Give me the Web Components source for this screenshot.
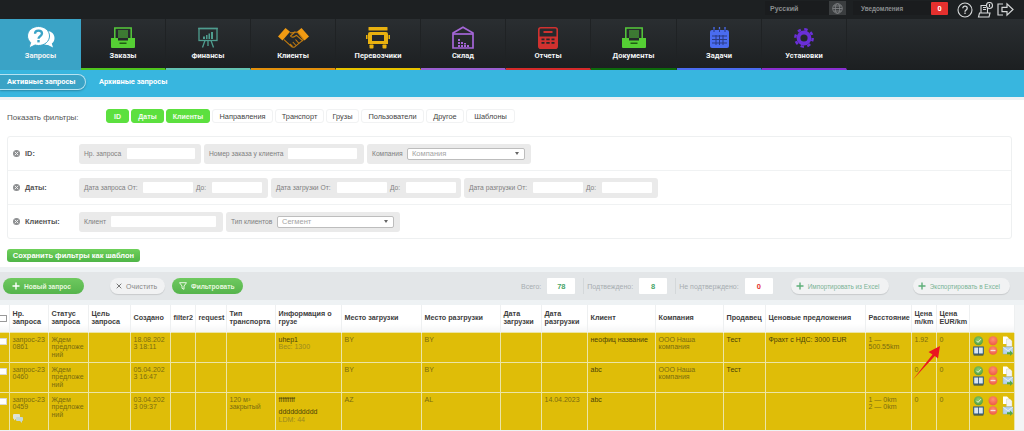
<!DOCTYPE html>
<html lang="ru">
<head>
<meta charset="utf-8">
<title>Запросы</title>
<style>
html, body { margin: 0; height: 431px; overflow: hidden; background: #eef2f4; font-family: "Liberation Sans", Arial, sans-serif; }
</style>
</head>
<body>
<app-topbar></app-topbar>
<app-nav>
  <nav-tab label="Запросы" icon="ask" w="81" active></nav-tab>
  <nav-tab label="Заказы" icon="tray" w="85" color="#4fc51f"></nav-tab>
  <nav-tab label="Финансы" icon="board" w="85" color="#62c2b2"></nav-tab>
  <nav-tab label="Клиенты" icon="hands" w="85" color="#e2900d"></nav-tab>
  <nav-tab label="Перевозчики" icon="truck" w="85" color="#e6c200"></nav-tab>
  <nav-tab label="Склад" icon="house" w="85" color="#9a5fd0"></nav-tab>
  <nav-tab label="Отчеты" icon="calc" w="85" color="#d42a2a"></nav-tab>
  <nav-tab label="Документы" icon="tray" w="86" color="#0c6a0c"></nav-tab>
  <nav-tab label="Задачи" icon="cal" w="85" color="#4a6cf0"></nav-tab>
  <nav-tab label="Установки" icon="gear" w="85" color="#8a2fd0"></nav-tab>
</app-nav>
<app-subnav></app-subnav>
<filter-panel>
  <filter-row label="ID:">
    <filter-group w="122"><f-field label="Нр. запроса" lw="43" w="68"></f-field></filter-group>
    <filter-group w="160"><f-field label="Номер заказа у клиента" lw="79" w="69"></f-field></filter-group>
    <filter-group w="164"><f-field label="Компания" lw="35" w="118" select="Компания"></f-field></filter-group>
  </filter-row>
  <filter-row label="Даты:">
    <filter-group w="189"><f-field label="Дата запроса От:" lw="59" w="50"></f-field><f-field label="До:" lw="16" w="50"></f-field></filter-group>
    <filter-group w="190"><f-field label="Дата загрузки От:" lw="61" w="50"></f-field><f-field label="До:" lw="16" w="50"></f-field></filter-group>
    <filter-group w="194"><f-field label="Дата разгрузки От:" lw="64" w="50"></f-field><f-field label="До:" lw="16" w="50"></f-field></filter-group>
  </filter-row>
  <filter-row label="Клиенты:" last>
    <filter-group w="144"><f-field label="Клиент" lw="27" w="105"></f-field></filter-group>
    <filter-group w="174"><f-field label="Тип клиентов" lw="46" w="117" select="Сегмент"></f-field></filter-group>
  </filter-row>
</filter-panel>
<app-toolbar></app-toolbar>
<request-table></request-table>
<red-arrow></red-arrow>

<script>
const ICONS = {
  ask: `<svg width="28" height="23" viewBox="0 0 28 23"><path fill="#fff" d="M20 5c4.400 0 7.500 3 7.500 7 0 2.400-1 4.300-2.700 5.500l1.200 4-5-2.600c-2 .2-4-.3-5.500-1.400z"/><path fill="#fff" stroke="#3aa3c6" stroke-width="1" d="M11.500.5C17.600.5 22.500 4.600 22.500 10s-4.900 9.500-11 9.500c-1.200 0-2.300-.2-3.400-.5L2 22l1.600-5.500C1.700 14.800.5 12.500.5 10 .5 4.600 5.400.5 11.500.5z"/><path fill="none" stroke="#3aa3c6" stroke-width="2.300" d="M8 7.800c0-2 1.500-3.200 3.500-3.200s3.500 1.200 3.500 3c0 2.700-3.500 2.600-3.500 5.200"/><rect x="10.300" y="14" width="2.400" height="2.400" fill="#3aa3c6"/></svg>`,
  tray: `<svg width="24" height="21" viewBox="0 0 24 21"><path fill="none" stroke="#55c93b" stroke-width="1.500" d="M3.800 11V1h16.400v10"/><path stroke="#55c93b" d="M7 4h10M7 6h10M7 8h10M7 10h10"/><path fill="#55cf34" d="M0 11h7v2.500h10V11h7v9a1 1 0 0 1-1 1H1a1 1 0 0 1-1-1z"/><rect x="8.500" y="15.500" width="7" height="1.500" fill="#1f5c14"/></svg>`,
  board: `<svg width="20" height="21" viewBox="0 0 20 21"><g fill="none" stroke="#4f9d8f" stroke-width="1.300"><rect x="1" y="1.500" width="18" height="12"/><path d="M.2 1.500h19.600M7 13.500 4.500 20.500M13 13.500l2.500 7M10 13.500V19"/></g><path fill="#4f9d8f" d="M5 12V9.500h2V12zM8 12V8h1.500v4zM10.500 12V6.500H12V12zM13 12V5h2v7z"/></svg>`,
  hands: `<svg width="31" height="20" viewBox="0 0 31 20"><path fill="#f09a12" d="M7.500 0 12 3.800 4.500 12.500 0 8.500zM23.500 0 31 8.500l-4.500 4L19 3.800z"/><g fill="none" stroke="#c27c10" stroke-width="1.100" stroke-linejoin="round"><path d="M12 4.500c2 .8 3.500.2 5-.5l2.500.2 6 7.500-8.500 7c-1.500.8-3 .5-4-.5l-7-6.500"/><path d="M17 4 12.500 8c1 1.500 3 1.500 4.500.3l1.500-1L25 13M21 15.500l-3.500-4M18 17.500l-3.200-3.500M14.500 18.500l-2.500-2.500"/></g></svg>`,
  truck: `<svg width="24" height="22" viewBox="0 0 24 22"><g fill="#e9b10f"><rect x="2.500" y="0" width="19" height="3.500" rx=".6"/><path d="M4 5h16a2 2 0 0 1 2 2v10H2V7a2 2 0 0 1 2-2zm2 3v6h12V8z" fill-rule="evenodd"/><rect x="0" y="8" width="1.500" height="4"/><rect x="22.500" y="8" width="1.500" height="4"/><rect x="3.500" y="17.500" width="4" height="4" rx=".7"/><rect x="16.500" y="17.500" width="4" height="4" rx=".7"/></g></svg>`,
  house: `<svg width="22" height="23" viewBox="0 0 22 23"><g fill="none" stroke="#a566d8" stroke-width="1.700"><path d="M1 7 11 1.200 21 7v15H1z"/><path d="M1 8h20" /></g><path fill="#a566d8" d="M6 13h2v2H6zM6 16h2v2H6zM6 19h2v2H6zM9 16h2v2H9zM9 19h2v2H9zM12 19h2v2h-2zM15 19h2v2h-2zM12 17h2v1.500h-2z"/></svg>`,
  calc: `<svg width="20" height="22" viewBox="0 0 20 22"><rect x=".8" y=".8" width="18.400" height="20.400" rx="2" fill="none" stroke="#d0312f" stroke-width="1.600"/><rect x="5.500" y="4" width="9" height="2" fill="#d0312f"/><path fill="#d0312f" d="M1 9.500h18V21H1zm2.500 2v1.700h3v-1.700zm4.800 0v1.700h3.400v-1.700zm5.200 0v1.700h3v-1.700zM3.500 15v1.700h3V15zm4.800 0v1.700h3.400V15zm5.200 0v1.700h3V15z" fill-rule="evenodd"/></svg>`,
  cal: `<svg width="19" height="21" viewBox="0 0 19 21"><path fill="#4a6cf0" d="M2 3h15a2 2 0 0 1 2 2v14a2 2 0 0 1-2 2H2a2 2 0 0 1-2-2V5a2 2 0 0 1 2-2z"/><path stroke="#4a6cf0" stroke-width="1.300" d="M4 0v3M9.500 0v3M15 0v3"/><path stroke="#1f2a60" stroke-width="1" d="M4 2v3M9.500 2v3M15 2v3M2 9h15M2 12.500h15M2 16h15M6 8v10M9.500 8v10M13 8v10" opacity=".75"/></svg>`,
  gear: `<svg width="20" height="20" viewBox="0 0 20 20"><circle cx="10" cy="10" r="8.700" fill="none" stroke="#6a2fd8" stroke-width="2.400" stroke-dasharray="3.400 3.430"/><circle cx="10" cy="10" r="5.500" fill="none" stroke="#6a2fd8" stroke-width="3.800"/></svg>`
};

class AppTopbar extends HTMLElement {
  constructor() {
    super();
    this.attachShadow({ mode: "open" }).innerHTML = `
    <style>
      :host { display: flex; height: 19px; background: #1d2022; padding-left: 765px; box-sizing: border-box; color: #8a8d8f; font: bold 7px "Liberation Sans", sans-serif; }
      .box { height: 14px; margin-top: 1px; background: #1a1c1e; display: flex; align-items: center; }
      .lang { width: 81px; padding-left: 5px; box-sizing: border-box; justify-content: space-between; }
      .globe { width: 17px; height: 14px; background: #3a3d3f; display: flex; align-items: center; justify-content: center; }
      .note { width: 97px; margin-left: 7px; padding-left: 8px; box-sizing: border-box; font-size: 6.300px; justify-content: space-between; }
      .badge { width: 17px; height: 13px; margin-right: 2px; background: #e5302e; color: #fff; font-size: 7.500px; display: flex; align-items: center; justify-content: center; border-radius: 1px; }
      .ic { display: flex; align-items: center; gap: 4px; margin-left: 7px; }
    </style>
    <div class="box lang">Русский
      <span class="globe"><svg width="11" height="11" viewBox="0 0 11 11" fill="none" stroke="#85888a" stroke-width=".8"><circle cx="5.500" cy="5.500" r="4.800"/><ellipse cx="5.500" cy="5.500" rx="2.200" ry="4.800"/><path d="M.7 5.500h9.600M1.500 3h8M1.500 8h8"/></svg></span>
    </div>
    <div class="box note">Уведомления<span class="badge">0</span></div>
    <div class="ic">
      <svg width="16" height="16" viewBox="0 0 16 16" fill="none" stroke="#d6d8d9" stroke-width="1.100"><circle cx="8" cy="8" r="7"/><path stroke-width="1.300" d="M5.800 6.300c0-1.300 1-2.100 2.200-2.100s2.200.8 2.200 2c0 1.800-2.200 1.700-2.200 3.500M8 10.600V12"/></svg>
      <svg width="16" height="16" viewBox="0 0 16 16" fill="none" stroke="#d6d8d9" stroke-width="1.100"><path d="M4 3.500h6.500V11H13l-1 4H1.500l1-4H4zM4 11h6.500"/><path d="M6 5.500h3M6 7.500h3"/><circle cx="12.500" cy="3.500" r="3" fill="#1d2022"/><path d="M12.500 2v3"/></svg>
      <svg width="17" height="15" viewBox="0 0 17 15" fill="none" stroke="#d6d8d9" stroke-width="1.200"><path d="M6 2H1v11h5"/><path d="M5 5.300h5V1.800l6 5.700-6 5.700V9.700H5z"/></svg>
    </div>`;
  }
}

class AppNav extends HTMLElement {
  constructor() {
    super();
    this.attachShadow({ mode: "open" }).innerHTML = `
    <style>
      :host { display: flex; height: 51px; background: linear-gradient(#2a2e31, #1c1f21); }
    </style>
    <slot></slot>`;
  }
}

class NavTab extends HTMLElement {
  connectedCallback() {
    const color = this.getAttribute("color") || "#3aa3c6";
    const active = this.hasAttribute("active");
    this.attachShadow({ mode: "open" }).innerHTML = `
    <style>
      :host { display: flex; flex-direction: column; align-items: center; box-sizing: border-box; height: 51px; width: ${this.getAttribute("w")}px; padding-top: 7px; border-bottom: 2px solid ${color}; border-right: 1px solid #1f2224; ${active ? "background: #3aa3c6; border-right: 0;" : ""} }
      .i { height: 23px; display: flex; align-items: center; }
      .l { margin-top: 2px; color: #f1f3f4; font: bold 7.500px/10px Roboto, "Liberation Sans", sans-serif; white-space: nowrap; }
    </style>
    <div class="i">${ICONS[this.getAttribute("icon")]}</div>
    <div class="l">${this.getAttribute("label")}</div>`;
  }
}

class AppSubnav extends HTMLElement {
  constructor() {
    super();
    this.attachShadow({ mode: "open" }).innerHTML = `
    <style>
      :host { display: flex; align-items: center; height: 27px; background: #38b6df; color: #fff; font: bold 7.500px Roboto, "Liberation Sans", sans-serif; box-sizing: border-box; padding-bottom: 4px; }
      .on { width: 86px; height: 16px; box-sizing: border-box; padding-left: 7px; display: flex; align-items: center; background: #3aa3c6; border: 1px solid #b5e3f2; border-left: 0; border-radius: 0 9px 9px 0; box-shadow: 0 1px 2px rgba(0,0,0,.25); }
      .off { margin-left: 13px; }
    </style>
    <div class="on">Активные запросы</div>
    <div class="off">Архивные запросы</div>`;
  }
}

class FilterPanel extends HTMLElement {
  constructor() {
    super();
    const names = [["ID", 1, 23], ["Даты", 1, 33], ["Клиенты", 1, 44], ["Направления", 0, 61], ["Транспорт", 0, 49], ["Грузы", 0, 33], ["Пользователи", 0, 63], ["Другое", 0, 38], ["Шаблоны", 0, 49]];
    const btns = names.map(([t, on, w]) => `<span class="b ${on ? "on" : ""}" style="width:${w}px">${t}</span>`).join("");
    this.attachShadow({ mode: "open" }).innerHTML = `
    <style>
      :host { display: block; height: 167px; margin-top: 3px; background: #fff; box-sizing: border-box; padding: 9px 12px 0 7px; font-family: "Liberation Sans", sans-serif; }
      .top { display: flex; align-items: center; height: 14px; }
      .cap { width: 99px; font-size: 8px; color: #555; position: relative; top: 1px; }
      .b { box-sizing: border-box; height: 14px; margin-right: 2px; display: flex; align-items: center; justify-content: center; font-size: 7.400px; color: #444; background: #fff; border: 1px solid #f1f2f3; border-radius: 3px; }
      .b.on { background: #5ce03f; color: #f2fdee; border-color: #5ce03f; font-size: 7px; font-weight: bold; }
      .box { margin-top: 13px; border: 1px solid #eef0f1; border-radius: 3px; }
      .save { margin-top: 10px; width: 133px; height: 13px; display: flex; align-items: center; justify-content: center; background: linear-gradient(#6ed05a, #4fb548); color: #fff; font-size: 7.500px; font-weight: bold; border-radius: 3px; }
    </style>
    <div class="top"><span class="cap">Показать фильтры:</span>${btns}</div>
    <div class="box"><slot></slot></div>
    <div class="save">Сохранить фильтры как шаблон</div>`;
  }
}

class FilterRow extends HTMLElement {
  connectedCallback() {
    this.attachShadow({ mode: "open" }).innerHTML = `
    <style>
      :host { display: flex; align-items: center; height: ${this.hasAttribute("last") ? 33 : 34}px; box-sizing: border-box; ${this.hasAttribute("last") ? "" : "border-bottom: 1px solid #f0f2f3;"} font-family: "Liberation Sans", sans-serif; }
      .x { width: 7px; height: 7px; margin-left: 5px; border-radius: 50%; background: #8d8f91; display: flex; align-items: center; justify-content: center; }
      .t { width: 59px; padding-left: 5px; box-sizing: border-box; font-size: 7.400px; font-weight: bold; color: #555; }
      .g { display: flex; gap: 3px; }
    </style>
    <span class="x"><svg width="5" height="5" viewBox="0 0 5 5" stroke="#eee" stroke-width="1"><path d="M.8.8l3.400 3.400M4.200.8.8 4.200"/></svg></span>
    <span class="t">${this.getAttribute("label")}</span>
    <div class="g"><slot></slot></div>`;
  }
}

class FilterGroup extends HTMLElement {
  connectedCallback() {
    this.attachShadow({ mode: "open" }).innerHTML = `
    <style>
      :host { display: flex; align-items: center; gap: 3px; width: ${this.getAttribute("w")}px; height: 20px; box-sizing: border-box; padding-left: 5px; background: #eaeaea; border-radius: 3px; }
    </style>
    <slot></slot>`;
  }
}

class FField extends HTMLElement {
  connectedCallback() {
    const sel = this.getAttribute("select");
    const control = sel
      ? `<span class="sel">${sel}<i></i></span>`
      : `<span class="inp"></span>`;
    this.attachShadow({ mode: "open" }).innerHTML = `
    <style>
      :host { display: flex; align-items: center; font: 6.700px "Liberation Sans", sans-serif; color: #808080; }
      .lb { width: ${this.getAttribute("lw")}px; white-space: nowrap; }
      .inp, .sel { display: block; box-sizing: border-box; width: ${this.getAttribute("w")}px; height: 11px; background: #fff; border-radius: 1px; }
      .sel { height: 12px; display: flex; align-items: center; justify-content: space-between; padding: 0 5px 0 4px; border: 1px solid #bdbdbd; border-radius: 2px; color: #a4a4a4; font-size: 7.500px; }
      i { border: 2px solid transparent; border-top: 3px solid #666; border-bottom: 0; }
    </style>
    <span class="lb">${this.getAttribute("label")}</span>${control}`;
  }
}

class AppToolbar extends HTMLElement {
  constructor() {
    super();
    const plus = (c) => `<svg width="8" height="8" viewBox="0 0 8 8" stroke="${c}" stroke-width="1.400"><path d="M4 .5v7M.5 4h7"/></svg>`;
    this.attachShadow({ mode: "open" }).innerHTML = `
    <style>
      :host { display: flex; align-items: center; height: 28px; margin-top: 5px; background: #e3e6e8; font: 7px "Liberation Sans", sans-serif; color: #a7adb1; box-sizing: border-box; padding-left: 3px; }
      .btn { display: flex; align-items: center; gap: 4px; height: 16px; box-sizing: border-box; border-radius: 8px; font-weight: bold; white-space: nowrap; }
      .g { background: linear-gradient(#6fc95f, #55b44c); color: #e6f7df; font-size: 6.600px; }
      .w { background: #f1f2f3; color: #888; box-shadow: 0 1px 1px rgba(0,0,0,.12); font-weight: normal; letter-spacing: .1px; }
      .ex { color: #7ab295; font-weight: normal; font-size: 6.400px; letter-spacing: 0; }
      .stat { width: 28px; height: 16px; margin: 0 8px 0 6px; background: #fff; display: flex; align-items: center; justify-content: center; font-weight: bold; color: #4aa56a; font-size: 7.500px; border-radius: 1px; }
      .sep { width: 1px; height: 16px; background: #d4d8da; margin-right: 3px; }
    </style>
    <div class="btn g" style="width:81px;padding-left:9px">${plus("#fff")}Новый запрос</div>
    <div class="btn w" style="width:55px;margin-left:26px;padding-left:6px"><svg width="6" height="6" viewBox="0 0 6 6" stroke="#777"><path d="M.7.7l4.600 4.600M5.300.7.7 5.300"/></svg>Очистить</div>
    <div class="btn g" style="width:71px;margin-left:7px;padding-left:7px"><svg width="8" height="8" viewBox="0 0 8 8" fill="none" stroke="#e6f7df"><path d="M.5.7h7L5 4v3.300L3 6.300V4z"/></svg>Фильтровать</div>
    <span style="margin-left:278px">Всего:</span><span class="stat">78</span><span class="sep"></span>
    <span>Подтвеждено:</span><span class="stat">8</span><span class="sep"></span>
    <span>Не подтверждено:</span><span class="stat" style="color:#e5302e;margin-right:18px">0</span>
    <div class="btn w ex" style="width:98px;padding-left:5px">${plus("#5fb07a")}Импортировать из Excel</div>
    <div class="btn w ex" style="width:97px;margin-left:24px;padding-left:5px">${plus("#5fb07a")}Экспортировать в Excel</div>`;
  }
}

const ROW_ICONS = `<svg width="41" height="20" viewBox="0 0 41 20">
  <defs>
    <radialGradient id="gr" cx=".5" cy=".4" r=".6"><stop offset="0" stop-color="#8fcf72"/><stop offset="1" stop-color="#4f9e3e"/></radialGradient>
    <radialGradient id="rd" cx=".5" cy=".35" r=".65"><stop offset="0" stop-color="#ff9070"/><stop offset="1" stop-color="#ee5a48"/></radialGradient>
  </defs>
  <circle cx="5.500" cy="4.700" r="4.500" fill="url(#gr)"/><path d="M3.300 4.700l1.700 1.700 2.900-3.200" fill="none" stroke="#e8f6e0" stroke-width="1"/>
  <circle cx="20" cy="4.700" r="4.500" fill="url(#rd)"/>
  <path fill="#fff" d="M30 .5h4l2 2v5.500h-6z"/><path fill="#f4f4f0" stroke="#c8c8b0" stroke-width=".4" d="M33.500 3h3.500l2 2v5.500h-5.500z"/>
  <rect x=".7" y="11" width="9.600" height="7" fill="#dbe6f2" stroke="#25507e"/><path d="M5.500 11v7" stroke="#25507e" stroke-width=".8"/><path d="M.7 19h9.600" stroke="#1c3d61"/>
  <circle cx="20" cy="14.500" r="4.300" fill="url(#rd)"/><path d="M17.500 14.500h5" stroke="#f8dcd4" stroke-width="1.300"/>
  <rect x="30" y="11" width="10" height="7" fill="#b9d4ee" stroke="#8aa9c6" stroke-width=".5"/><path d="M30 11l5 3.800 5-3.800" fill="none" stroke="#fff" stroke-width=".6"/><path d="M34 16.300h3v-1.800l3 2.800-3 2.700v-1.700h-3z" fill="#58a83c"/>
</svg>`;

const COLS = [9, 39, 40, 42, 40, 25, 31, 49, 66, 80, 79, 41, 46, 68, 68, 42, 100, 46, 25, 33, 45];
const HEAD = ["", "Нр. запроса", "Статус запроса", "Цель запроса", "Создано", "filter2", "request", "Тип транспорта", "Информация о грузе", "Место загрузки", "Место разгрузки", "Дата загрузки", "Дата разгрузки", "Клиент", "Компания", "Продавец", "Ценовые предложения", "Расстояние", "Цена m/km", "Цена EUR/km", ""];
const STATUS = "Ждем<br>предложе<br>ний";
const BUBBLE = `<svg class="cm" width="10" height="9" viewBox="0 0 10 9"><path fill="#dfe3d6" d="M1 0h5a1 1 0 0 1 1 1v3a1 1 0 0 1-1 1H3L1 6.500V5a1 1 0 0 1-1-1V1a1 1 0 0 1 1-1z"/><path fill="#c4d8d8" d="M4 3h5a1 1 0 0 1 1 1v2a1 1 0 0 1-1 1v2L7 7H4a1 1 0 0 1-1-1V4a1 1 0 0 1 1-1z"/></svg>`;
const ROWS = [
  ["запрос-23<br>0861", STATUS, "", "18.08.202<br>3 18:11", "", "", "", "<b>uhep1</b><br><em>Вес: 1300</em>", "BY", "BY", "", "", "<b>неофиц название</b>", "ООО Наша<br>компания", "<b>Тест</b>", "<b>Фрахт с НДС: 3000 EUR</b>", "1 —<br>500.55km", "1.92", "0"],
  ["запрос-23<br>0460", STATUS, "", "05.04.202<br>3 16:47", "", "", "", "", "BY", "BY", "", "", "<b>abc</b>", "ООО Наша<br>компания", "<b>Тест</b>", "", "", "0", "0"],
  ["запрос-23<br>0459" + BUBBLE, STATUS, "", "03.04.202<br>3 09:37", "", "", "120 м³<br>закрытый", "<b>fffffffff</b><br><span class='gap'></span><b>dddddddddd</b><br><em>LDM: 44</em>", "AZ", "AL", "", "14.04.2023", "<b>abc</b>", "", "", "", "1 — 0km<br>2 — 0km", "0", "0"]
];

class RequestTable extends HTMLElement {
  constructor() {
    super();
    const cols = COLS.map((w) => `<col style="width:${w}px">`).join("");
    const head = HEAD.map((t, i) => `<th>${i === 0 ? '<span class="ck"></span>' : t}</th>`).join("");
    const body = ROWS.map((r) => `<tr><td class="c0"><span class="ck"></span></td>${r.map((t) => `<td>${t}</td>`).join("")}<td class="ri">${ROW_ICONS}</td></tr>`).join("");
    this.attachShadow({ mode: "open" }).innerHTML = `
    <style>
      :host { display: block; margin-top: 5px; height: 125px; overflow: hidden; background: #f3f5f6; font: 7px/7.800px "Liberation Sans", sans-serif; }
      table { border-collapse: collapse; table-layout: fixed; width: 1014px; }
      th { height: 27px; padding: 0 3px; box-sizing: border-box; background: linear-gradient(#fff 70%, #f4f5f6); border-right: 1px solid #eef0f1; color: #3d3d3d; text-align: left; font-size: 7.200px; line-height: 8px; font-weight: bold; overflow: hidden; }
      th:first-child, td:first-child { padding: 0; }
      td { height: 30px; padding: 3px 3px 0; box-sizing: border-box; vertical-align: top; background: #dfbd08; border-right: 1px solid #ece5a4; border-bottom: 1px solid #ece5a4; color: #7a6c10; overflow: hidden; white-space: nowrap; }
      tr:first-child td { border-top: 1px solid #ece5a4; }
      tr:last-child td { height: 45px; }
      td b { font-weight: normal; color: #4a4208; }
      td em { font-style: normal; color: #9a8a20; }
      .ck { display: block; width: 7px; height: 7px; background: #fff; border: 1px solid #999; border-left: 0; box-sizing: border-box; border-radius: 0 1px 1px 0; }
      td .ck { border-color: #d8d8d8; margin-top: 5px; }
      .gap { display: block; height: 5px; }
      .cm { display: block; margin-top: 3px; }
      td.ri { padding: 3px 0 0 3px; }
      .ri svg { display: block; }
    </style>
    <table><colgroup>${cols}</colgroup><thead><tr>${head}</tr></thead><tbody>${body}</tbody></table>`;
  }
}

// стрелка поверх таблицы
class RedArrow extends HTMLElement {
  constructor() {
    super();
    this.attachShadow({ mode: "open" }).innerHTML = `
    <style>:host { position: absolute; left: 910px; top: 343px; width: 34px; height: 40px; }</style>
    <svg width="34" height="40" viewBox="0 0 34 40"><path fill="#ea1620" d="M3 36.500 22.500 11.500 18.500 9 30 3 28 15.500 24.800 13z"/></svg>`;
  }
}

customElements.define("app-topbar", AppTopbar);
customElements.define("app-nav", AppNav);
customElements.define("nav-tab", NavTab);
customElements.define("app-subnav", AppSubnav);
customElements.define("filter-panel", FilterPanel);
customElements.define("filter-row", FilterRow);
customElements.define("filter-group", FilterGroup);
customElements.define("f-field", FField);
customElements.define("app-toolbar", AppToolbar);
customElements.define("request-table", RequestTable);
customElements.define("red-arrow", RedArrow);
</script>
</body>
</html>
